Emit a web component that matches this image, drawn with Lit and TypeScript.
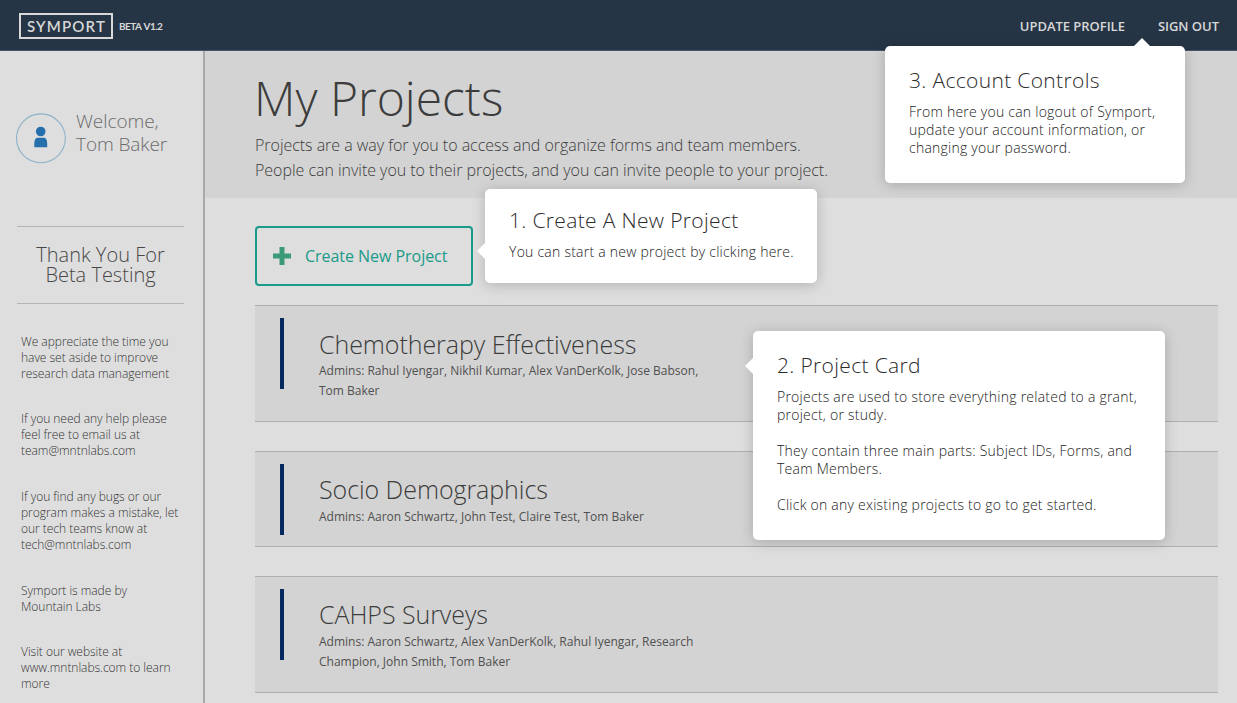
import { LitElement, html, css } from "lit";
import { customElement, property } from "lit/decorators.js";

const lines = (items: string[]) =>
  items.map((text) => html`<span class="line">${text}</span>`);

@customElement("guide-tip")
class GuideTip extends LitElement {
  @property() heading = "";
  @property() arrow = "left";
  @property({ attribute: false }) blocks: string[][] = [];

  static styles = css`
    :host {
      display: block;
      box-sizing: border-box;
      padding: var(--tip-pad, 22px) 24px 0;
      background: #fff;
      border-radius: 5px;
      box-shadow: 0 2px 14px rgba(0, 0, 0, 0.2);
      color: #222;
    }
    .arrow {
      position: absolute;
      width: 0;
      height: 0;
      border: 8px solid transparent;
    }
    .left {
      left: -16px;
      top: var(--arrow-top, 54px);
      border-right-color: #fff;
    }
    .up {
      top: -16px;
      left: 249px;
      border-bottom-color: #fff;
    }
    .title {
      margin: 0;
      font-weight: 300;
      font-size: 21px;
      line-height: 24px;
      letter-spacing: 0.34px;
      white-space: nowrap;
      color: #2c2c2c;
    }
    .body {
      margin: 11px 0 0;
      display: flex;
      flex-direction: column;
      gap: 18px;
      font-size: 14px;
      line-height: 18px;
      font-weight: 300;
      letter-spacing: 0.24px;
    }
    .block {
      margin: 0;
    }
    .line {
      display: block;
      white-space: nowrap;
    }
  `;

  render() {
    return html`
      <span class="arrow ${this.arrow}"></span>
      <h3 class="title">${this.heading}</h3>
      <div class="body">
        ${this.blocks.map((b) => html`<p class="block">${lines(b)}</p>`)}
      </div>
    `;
  }
}

@customElement("project-card")
class ProjectCard extends LitElement {
  @property() name = "";
  @property({ attribute: false }) admins: string[] = [];

  static styles = css`
    :host {
      display: flex;
      box-sizing: border-box;
      background: #d3d3d3;
      border-top: 1px solid #afafaf;
      border-bottom: 1px solid #afafaf;
      padding: 12px 0 0 25px;
    }
    .bar {
      width: 4px;
      height: 71px;
      background: #052a60;
    }
    .info {
      padding: 8px 0 0 35px;
    }
    .name {
      margin: 0;
      padding: var(--name-pad, 0 0 1px);
      font-weight: 300;
      font-size: 25px;
      line-height: 34px;
      letter-spacing: -0.06px;
      white-space: nowrap;
      color: #3c3c3c;
    }
    .admins {
      margin: 0;
      font-size: 12px;
      line-height: 20px;
      color: #505050;
    }
    .line {
      display: block;
      white-space: nowrap;
    }
  `;

  render() {
    return html`
      <div class="bar"></div>
      <div class="info">
        <h2 class="name">${this.name}</h2>
        <p class="admins">${lines(this.admins)}</p>
      </div>
    `;
  }
}

@customElement("app-root")
class AppRoot extends LitElement {
  static styles = css`
    :host {
      position: relative;
      display: flex;
      flex-direction: column;
      width: 1237px;
      height: 703px;
      overflow: hidden;
      background: #dedede;
      font-family: "Open Sans", "Noto Sans", sans-serif;
    }
    .topbar {
      box-sizing: border-box;
      flex: none;
      height: 51px;
      display: flex;
      align-items: center;
      padding: 1px 18px 0 19px;
      background: #263546;
      border-bottom: 1px solid #45566b;
      color: #d8d8d8;
    }
    .logo {
      box-sizing: border-box;
      width: 94px;
      height: 26px;
      border: 2px solid #d8d8d8;
      padding-left: 6px;
      font: 600 15px/22px Lato, sans-serif;
      letter-spacing: 1.15px;
      white-space: nowrap;
    }
    .beta {
      flex: 1;
      margin: 1px 0 0 6px;
      font: 700 10px/14px Lato, sans-serif;
      letter-spacing: -0.55px;
      word-spacing: 1px;
    }
    .nav {
      display: flex;
      gap: 33px;
      font-size: 13px;
      font-weight: 600;
      letter-spacing: -0.03px;
      white-space: nowrap;
    }
    .body {
      flex: 1;
      min-height: 0;
      display: flex;
    }
    .side {
      box-sizing: border-box;
      flex: none;
      width: 205px;
      border-right: 2px solid #a9a9a9;
    }
    .user {
      display: flex;
      height: 115px;
      padding: 60px 0 0 16px;
      gap: 10px;
    }
    .avatar {
      flex: none;
      margin-top: 2px;
    }
    .hello {
      margin: -1px 0 0;
      font-size: 19px;
      line-height: 23px;
      font-weight: 300;
      letter-spacing: -0.08px;
      color: #6c6c6c;
    }
    .thanks {
      width: 167px;
      height: 76px;
      margin-left: 17px;
      display: flex;
      flex-direction: column;
      justify-content: center;
      border-top: 1px solid #b4b4b4;
      border-bottom: 1px solid #b4b4b4;
      text-align: center;
      font-size: 20px;
      line-height: 20px;
      font-weight: 300;
      color: #484848;
    }
    .notes {
      display: flex;
      flex-direction: column;
      gap: 29.7px;
      padding: 29.5px 0 0 21px;
      font-size: 12px;
      line-height: 16px;
      font-weight: 300;
      letter-spacing: -0.03px;
      color: #333;
    }
    .note {
      margin: 0;
    }
    .line {
      display: block;
      white-space: nowrap;
    }
    .main {
      flex: 1;
      min-width: 0;
    }
    .hero {
      box-sizing: border-box;
      height: 147px;
      padding: 17px 0 0 50px;
      background: #d3d3d3;
    }
    .heading {
      margin: 0 0 0 -1px;
      font-size: 48px;
      line-height: 60px;
      font-weight: 300;
      color: #3c3c3c;
    }
    .lead {
      margin: 5px 0 0;
      font-size: 16px;
      line-height: 25px;
      font-weight: 300;
      letter-spacing: -0.03px;
      color: #3c3c3c;
    }
    .create {
      box-sizing: border-box;
      width: 218px;
      height: 60px;
      margin: 28px 0 19px 50px;
      padding: 0 0 0 16px;
      display: flex;
      align-items: center;
      gap: 14px;
      border: 2px solid #1a9a89;
      border-radius: 4px;
      background: none;
      font: 400 16px/22px "Open Sans", sans-serif;
      letter-spacing: -0.04px;
      color: #1a9a89;
      white-space: nowrap;
    }
    .cards {
      display: flex;
      flex-direction: column;
      gap: 29px;
      padding: 0 19px 0 50px;
    }
    .tall {
      height: 117px;
    }
    .first {
      --name-pad: 1px 0 0;
    }
    .short {
      height: 96px;
    }
    .tip {
      position: absolute;
    }
    .tip-create {
      left: 485px;
      top: 189px;
      width: 332px;
      height: 94px;
      --tip-pad: 19px;
    }
    .tip-card {
      left: 753px;
      top: 331px;
      width: 412px;
      height: 209px;
      --arrow-top: 27px;
    }
    .tip-account {
      left: 885px;
      top: 46px;
      width: 300px;
      height: 137px;
    }
  `;

  private notes = [
    ["We appreciate the time you", "have set aside to improve", "research data management"],
    ["If you need any help please", "feel free to email us at", "team@mntnlabs.com"],
    ["If you find any bugs or our", "program makes a mistake, let", "our tech teams know at", "tech@mntnlabs.com"],
    ["Symport is made by", "Mountain Labs"],
    ["Visit our website at", "www.mntnlabs.com to learn", "more"],
  ];

  render() {
    return html`
      <header class="topbar">
        <div class="logo">SYMPORT</div>
        <span class="beta">BETA V1.2</span>
        <nav class="nav"><span>UPDATE PROFILE</span><span>SIGN OUT</span></nav>
      </header>
      <div class="body">
        <aside class="side">
          <div class="user">
            <svg class="avatar" width="50" height="51" viewBox="0 0 50 51">
              <circle cx="24.9" cy="25.3" r="24.4" fill="none" stroke="#8db2c8" stroke-width="1.1" />
              <circle cx="24.7" cy="18.5" r="4.8" fill="#256fad" />
              <path d="M18.3 34.2V30Q18.8 24.8 21.5 24.8H28Q30.7 24.8 31.2 30V34.2Z" fill="#256fad" />
            </svg>
            <p class="hello">${lines(["Welcome,", "Tom Baker"])}</p>
          </div>
          <div class="thanks">${lines(["Thank You For", "Beta Testing"])}</div>
          <div class="notes">
            ${this.notes.map((n) => html`<p class="note">${lines(n)}</p>`)}
          </div>
        </aside>
        <main class="main">
          <section class="hero">
            <h1 class="heading">My Projects</h1>
            <p class="lead">
              ${lines([
                "Projects are a way for you to access and organize forms and team members.",
                "People can invite you to their projects, and you can invite people to your project.",
              ])}
            </p>
          </section>
          <button class="create">
            <svg width="18" height="18" viewBox="0 0 18 18">
              <path d="M6.5 0h5v6.5H18v5h-6.5V18h-5v-6.5H0v-5h6.5z" fill="#3b9a78" />
            </svg>
            Create New Project
          </button>
          <div class="cards">
            <project-card
              class="tall first"
              name="Chemotherapy Effectiveness"
              .admins=${["Admins: Rahul Iyengar, Nikhil Kumar, Alex VanDerKolk, Jose Babson,", "Tom Baker"]}
            ></project-card>
            <project-card
              class="short"
              name="Socio Demographics"
              .admins=${["Admins: Aaron Schwartz, John Test, Claire Test, Tom Baker"]}
            ></project-card>
            <project-card
              class="tall"
              name="CAHPS Surveys"
              .admins=${["Admins: Aaron Schwartz, Alex VanDerKolk, Rahul Iyengar, Research", "Champion, John Smith, Tom Baker"]}
            ></project-card>
          </div>
        </main>
      </div>
      <guide-tip
        class="tip tip-create"
        heading="1. Create A New Project"
        .blocks=${[["You can start a new project by clicking here."]]}
      ></guide-tip>
      <guide-tip
        class="tip tip-card"
        heading="2. Project Card"
        .blocks=${[
          ["Projects are used to store everything related to a grant,", "project, or study."],
          ["They contain three main parts: Subject IDs, Forms, and", "Team Members."],
          ["Click on any existing projects to go to get started."],
        ]}
      ></guide-tip>
      <guide-tip
        class="tip tip-account"
        arrow="up"
        heading="3. Account Controls"
        .blocks=${[["From here you can logout of Symport,", "update your account information, or", "changing your password."]]}
      ></guide-tip>
    `;
  }
}
